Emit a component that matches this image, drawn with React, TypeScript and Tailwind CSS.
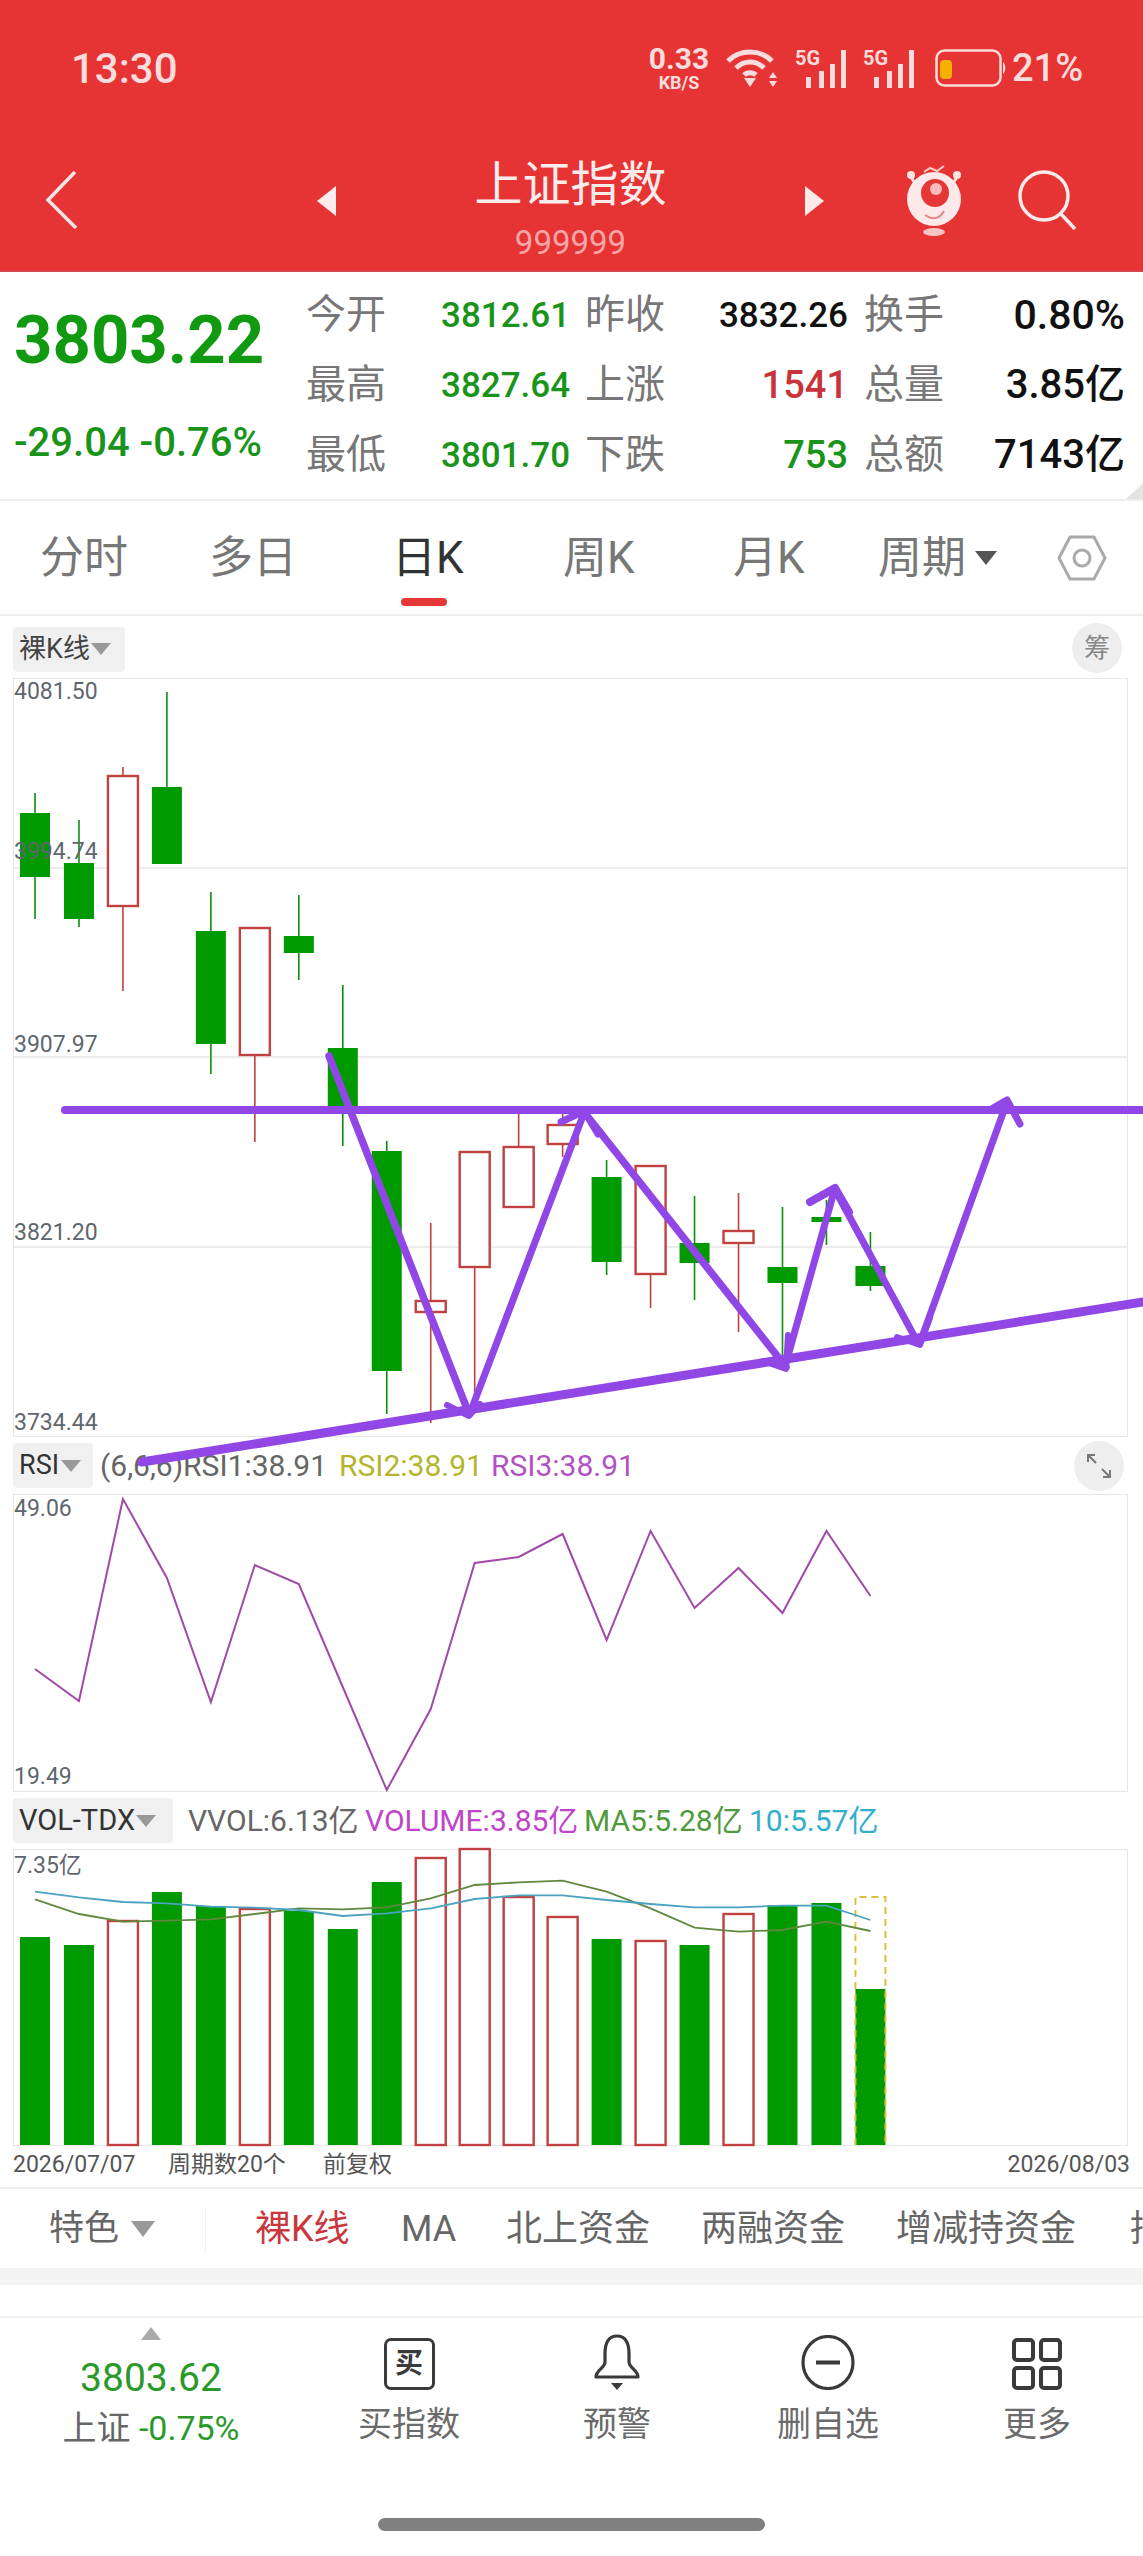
import React from "react";

const XS = Array.from({ length: 20 }, (_, i) => 35 + i * 43.97);
const BW = 30;

type C = { up: boolean; h: number; l: number; t: number; b: number };
const candles: C[] = [
  { up: false, h: 793, l: 919, t: 813, b: 877 },
  { up: false, h: 820, l: 927, t: 863, b: 919 },
  { up: true, h: 767, l: 991, t: 776, b: 906 },
  { up: false, h: 692, l: 864, t: 787, b: 864 },
  { up: false, h: 892, l: 1074, t: 931, b: 1044 },
  { up: true, h: 928, l: 1142, t: 928, b: 1055 },
  { up: false, h: 895, l: 980, t: 936, b: 953 },
  { up: false, h: 985, l: 1146, t: 1048, b: 1110 },
  { up: false, h: 1141, l: 1414, t: 1151, b: 1371 },
  { up: true, h: 1223, l: 1423, t: 1301, b: 1312 },
  { up: true, h: 1152, l: 1407, t: 1152, b: 1267 },
  { up: true, h: 1112, l: 1207, t: 1147, b: 1207 },
  { up: true, h: 1110, l: 1157, t: 1125, b: 1144 },
  { up: false, h: 1160, l: 1275, t: 1177, b: 1262 },
  { up: true, h: 1166, l: 1308, t: 1166, b: 1274 },
  { up: false, h: 1196, l: 1300, t: 1243, b: 1263 },
  { up: true, h: 1193, l: 1332, t: 1231, b: 1243 },
  { up: false, h: 1207, l: 1357, t: 1267, b: 1283 },
  { up: false, h: 1200, l: 1245, t: 1217, b: 1222 },
  { up: false, h: 1232, l: 1291, t: 1266, b: 1286 },
];

const rsi = [1669, 1701, 1499, 1578, 1702, 1565, 1584, 1687, 1790, 1709, 1563, 1557, 1534, 1640, 1531, 1608, 1568, 1613, 1531, 1596];
const vols = [1937, 1945, 1921, 1892, 1906, 1909, 1911, 1929, 1882, 1858, 1849, 1897, 1917, 1939, 1941, 1945, 1914, 1905, 1903, 1989];
const ma5 = [238, 282, 305, 302, 298, 282, 265, 268, 262, 235, 195, 187, 182, 215, 265, 323, 335, 330, 305, 333];
const ma10 = [215, 232, 246, 250, 260, 263, 270, 288, 280, 265, 237, 226, 226, 240, 252, 262, 262, 257, 257, 300];

const toPts = (ys: number[], f: (y: number) => number = (y) => y) =>
  ys.map((y, i) => `${XS[i]},${f(y)}`).join(" ");

function StatLabel({ children, pad }: { children: React.ReactNode; pad?: boolean }) {
  return <div className={pad ? "whitespace-nowrap pl-[16px] text-[40px] leading-none text-[#777777]" : "whitespace-nowrap text-[40px] leading-none text-[#777777]"}>{children}</div>;
}

function Status() {
  return (
    <div className="flex h-[136px] items-center text-[#fbdcdc]">
      <div className="ml-[71px] mt-[2px] w-[576px] text-[42px] font-medium leading-none">13:30</div>
      <div className="flex w-[64px] flex-col items-center font-bold leading-none">
        <span className="text-[30px] leading-[28px]">0.33</span>
        <span className="mt-[1px] text-[18px] leading-[18px]">KB/S</span>
      </div>
      <svg className="ml-[14px]" width="56" height="40" viewBox="0 0 56 40" fill="none" stroke="#fbdcdc" strokeWidth="5">
        <path d="M3 13C15 1 35 1 47 13" />
        <path d="M11 20C19 12 31 12 39 20" />
        <path d="M19 27C22 24 28 24 31 27" />
        <path d="M19 30L25 39L31 30Z" fill="#fbdcdc" stroke="none" />
        <path d="M48 24L52 30H44ZM48 39L52 33H44Z" fill="#fbdcdc" stroke="none" />
      </svg>
      <Signal className="ml-[14px]" />
      <Signal className="ml-[17px]" />
      <svg className="ml-[21px]" width="72" height="38" viewBox="0 0 72 38" fill="none">
        <rect x="1.5" y="1.5" width="64" height="35" rx="8" stroke="#fbdcdc" strokeWidth="2.5" />
        <rect x="5" y="11" width="12" height="19" rx="4" fill="#f5b000" />
        <path d="M68 13C71 15 71 23 68 25Z" fill="#fbdcdc" />
      </svg>
      <div className="ml-[5px] text-[38px] font-medium leading-none">21%</div>
    </div>
  );
}

function Signal({ className }: { className: string }) {
  return (
    <div className={`relative h-[40px] w-[51px] ${className}`}>
      <span className="absolute left-0 top-0 text-[20px] font-bold leading-none">5G</span>
      <svg className="absolute inset-0" width="51" height="40" viewBox="0 0 51 40" fill="#fbdcdc">
        <rect x="11" y="29" width="5" height="11" />
        <rect x="24" y="23" width="5" height="17" />
        <rect x="35" y="16" width="5" height="24" />
        <rect x="46" y="2" width="5" height="38" />
      </svg>
    </div>
  );
}

function Nav() {
  return (
    <div className="flex h-[134px] items-start">
      <div className="w-[317px] pl-[45px] pt-[35px]">
        <svg width="34" height="58" viewBox="0 0 34 58" fill="none" stroke="#fbe4e4" strokeWidth="3.5">
          <path d="M30 1L3 29L31 57" />
        </svg>
      </div>
      <svg className="mt-[50px]" width="20" height="30" viewBox="0 0 20 30" fill="#fdeaea"><path d="M19 0V30L0 15Z" /></svg>
      <div className="flex w-[467px] flex-col items-center">
        <div className="mt-[24px] text-[48px] leading-[50px] text-[#fdecec]">上证指数</div>
        <div className="mt-[15px] text-[33px] leading-[36px] text-[#f5a6a6]">999999</div>
      </div>
      <svg className="mt-[50px]" width="20" height="30" viewBox="0 0 20 30" fill="#fdeaea"><path d="M1 0V30L20 15Z" /></svg>
      <svg className="ml-[82px] mt-[29px]" width="56" height="72" viewBox="0 0 56 72" fill="none">
        <path d="M18 7L24 3L31 6L38 1" stroke="#f8c9c9" strokeWidth="2" />
        <circle cx="5" cy="10" r="4" fill="#fde4e4" />
        <circle cx="51" cy="10" r="4" fill="#fde4e4" />
        <path d="M5 12L10 20M51 12L46 20" stroke="#fde4e4" strokeWidth="3" />
        <circle cx="28" cy="34" r="27" fill="#fde9e9" />
        <circle cx="29" cy="28" r="14" fill="#e63737" />
        <circle cx="30" cy="24" r="6" fill="#f9bcbc" />
        <path d="M19 50C28 56 34 53 38 46" stroke="#e98282" strokeWidth="2" />
        <ellipse cx="28" cy="67" rx="11" ry="4" fill="#f8c3c3" />
      </svg>
      <svg className="ml-[55px] mt-[34px]" width="60" height="60" viewBox="0 0 60 60" fill="none" stroke="#fdeaea" strokeWidth="3.5">
        <circle cx="27" cy="26" r="24" />
        <path d="M44 44L58 59" />
      </svg>
    </div>
  );
}

function V({ children, r, c, size = "text-[35px]" }: { children: React.ReactNode; r?: boolean; c: string; size?: string }) {
  return <div className={`${r ? "text-right" : ""} ${size} font-medium leading-none ${c}`}>{children}</div>;
}

function Stats() {
  const cells: React.ReactNode[] = [
    <StatLabel key="a">今开</StatLabel>, <V key="b" c="text-[#1a931a]">3812.61</V>, <StatLabel key="c">昨收</StatLabel>, <V key="d" r c="text-[#111111]">3832.26</V>, <StatLabel key="e" pad>换手</StatLabel>, <V key="f" r c="text-[#111111]" size="text-[41px]">0.80%</V>,
    <StatLabel key="g">最高</StatLabel>, <V key="h" c="text-[#1a931a]">3827.64</V>, <StatLabel key="i">上涨</StatLabel>, <V key="j" r size="text-[38px]" c="text-[#c7343c]">1541</V>, <StatLabel key="k" pad>总量</StatLabel>, <V key="l" r c="text-[#111111]" size="text-[40px]">3.85亿</V>,
    <StatLabel key="m">最低</StatLabel>, <V key="n" c="text-[#1a931a]">3801.70</V>, <StatLabel key="o">下跌</StatLabel>, <V key="p" r size="text-[38px]" c="text-[#1a931a]">753</V>, <StatLabel key="q" pad>总额</StatLabel>, <V key="r" r c="text-[#111111]" size="text-[40px]">7143亿</V>,
  ];
  return (
    <div className="relative flex h-[227px]">
      <div className="flex w-[306px] flex-col pl-[14px]">
        <div className="mt-[32px] text-[67px] font-bold leading-[72px] text-[#119911]">3803.22</div>
        <div className="mt-[47px] whitespace-nowrap text-[40px] font-medium leading-[40px] text-[#1a931a]">-29.04 -0.76%</div>
      </div>
      <div className="grid grid-cols-[135px_144px_80px_183px_96px_181px] grid-rows-[70px_70px_70px] items-center pt-[8px]">
        {cells}
      </div>
      <svg className="absolute bottom-0 right-0" width="17" height="16" viewBox="0 0 17 16"><path d="M17 0V16H0Z" fill="#e4e4e4" /></svg>
    </div>
  );
}

function Tabs() {
  return (
    <div className="flex h-[117px] items-center border-y-2 border-[#eeeeee] text-[44px] leading-none text-[#777777]">
      <div className="ml-[40px] w-[169px]">分时</div>
      <div className="w-[183px]">多日</div>
      <div className="relative w-[171px] text-[#333333]">
        日K
        <span className="absolute left-[9px] top-[62px] h-[8px] w-[46px] rounded-full bg-[#e63737]" />
      </div>
      <div className="w-[170px]">周K</div>
      <div className="w-[145px]">月K</div>
      <div className="w-[97px]">周期</div>
      <svg width="22" height="14" viewBox="0 0 22 14" fill="#555555"><path d="M0 0H22L11 14Z" /></svg>
      <svg className="ml-[60px]" width="50" height="46" viewBox="0 0 50 46" fill="none" stroke="#aaaaaa" strokeWidth="3">
        <path d="M13 2H37L48 23L37 44H13L2 23Z" />
        <circle cx="25" cy="23" r="8" />
      </svg>
    </div>
  );
}

function Candles() {
  return (
    <svg className="absolute inset-0" width="1113" height="757" viewBox="14 679 1113 757" fill="none">
      {[868, 1057, 1247].map((y) => (
        <line key={y} x1="14" x2="1127" y1={y} y2={y} stroke="#e6e6e6" strokeWidth="1.5" />
      ))}
      {candles.map((c, i) => {
        const col = c.up ? "#c0413f" : "#0a8f0a";
        return (
          <g key={i}>
            <line x1={XS[i]} x2={XS[i]} y1={c.h} y2={c.l} stroke={col} strokeWidth="1.6" />
            {c.up ? (
              <rect x={XS[i] - BW / 2} y={c.t} width={BW} height={c.b - c.t} fill="#ffffff" stroke={col} strokeWidth="2.4" />
            ) : (
              <rect x={XS[i] - BW / 2} y={c.t} width={BW} height={c.b - c.t} fill="#009900" />
            )}
          </g>
        );
      })}
    </svg>
  );
}

function Axis({ children, className }: { children: React.ReactNode; className: string }) {
  return <span className={`absolute left-0 text-[23px] leading-none text-[#5f666d] ${className}`}>{children}</span>;
}

function Bars() {
  return (
    <svg className="absolute inset-0 overflow-visible" width="1113" height="295" viewBox="14 1850 1113 295" fill="none">
      {vols.map((t, i) =>
        candles[i].up ? (
          <rect key={i} x={XS[i] - BW / 2} y={t} width={BW} height={2145 - t} fill="#ffffff" stroke="#c0413f" strokeWidth="2.4" />
        ) : (
          <rect key={i} x={XS[i] - BW / 2} y={t} width={BW} height={2145 - t} fill="#009900" />
        )
      )}
      <path d={`M${XS[19] - BW / 2} 1989V1897H${XS[19] + BW / 2}V2145`} stroke="#d7c23c" strokeWidth="2" strokeDasharray="7 5" />
      <path d={`M${XS[19] - BW / 2} 2145V1989`} stroke="#d7c23c" strokeWidth="2" strokeDasharray="7 5" />
      <polyline points={toPts(ma5, (y) => y / 3 + 1820)} stroke="#5f8a3e" strokeWidth="1.8" />
      <polyline points={toPts(ma10, (y) => y / 3 + 1820)} stroke="#4aa3bf" strokeWidth="1.8" />
    </svg>
  );
}

function Annotations() {
  const col = "#9147e6";
  return (
    <svg className="pointer-events-none absolute inset-0" width="1143" height="2556" viewBox="0 0 1143 2556" fill="none" stroke={col} strokeLinecap="round" strokeLinejoin="round">
      <path d="M65 1110H1143" strokeWidth="8" />
      <path d="M142 1462L1143 1302" strokeWidth="9" />
      <path d="M329 1056L469 1414" strokeWidth="7.5" />
      <path d="M447 1405L469 1416L480 1404" strokeWidth="6" />
      <path d="M472 1408L584 1113" strokeWidth="7" />
      <path d="M561 1122L584 1111L598 1134" strokeWidth="7" />
      <path d="M588 1117L786 1367" strokeWidth="7.5" />
      <path d="M763 1361L786 1369L788 1335" strokeWidth="6" />
      <path d="M786 1363L835 1188" strokeWidth="7" />
      <path d="M810 1202L835 1188L849 1212" strokeWidth="8" />
      <path d="M835 1190L918 1343" strokeWidth="7" />
      <path d="M897 1337L920 1345L930 1318" strokeWidth="6" />
      <path d="M921 1340L1007 1102" strokeWidth="7" />
      <path d="M993 1108L1007 1100L1020 1124" strokeWidth="7" />
    </svg>
  );
}

function BottomItem({ label, w, children }: { label: string; w: string; children: React.ReactNode }) {
  return (
    <div className={`flex flex-col items-center ${w}`}>
      <div className="flex h-[72px] items-end">{children}</div>
      <div className="mt-[14px] text-[34px] leading-[40px] text-[#6b6b6b]">{label}</div>
    </div>
  );
}

export default function App() {
  return (
    <div className="relative flex h-[2556px] w-[1143px] flex-col overflow-hidden bg-white font-[Roboto,'Noto_Sans_CJK_SC',sans-serif]">
      <header className="h-[272px] border-b-2 border-[#d64550] bg-[#e63333]">
        <Status />
        <Nav />
      </header>
      <Stats />
      <Tabs />
      <div className="flex h-[62px] items-center justify-between pl-[13px] pr-[21px]">
        <div className="mt-[4px] flex h-[45px] w-[112px] items-center rounded-[4px] bg-[#f0f0f0] pl-[6px] text-[27px] leading-none text-[#444444]">
          裸K线
          <svg className="ml-[1px]" width="20" height="12" viewBox="0 0 20 12" fill="#999999"><path d="M0 0H20L10 12Z" /></svg>
        </div>
        <div className="mt-[2px] flex h-[50px] w-[50px] items-center justify-center rounded-full bg-[#eeeeee] text-[26px] leading-none text-[#888888]">筹</div>
      </div>
      <div className="relative mx-[13px] h-[759px] w-[1115px] shrink-0 border border-[#e6e6e6]">
        <Candles />
        <Axis className="top-[1px]">4081.50</Axis>
        <Axis className="top-[161px]">3994.74</Axis>
        <Axis className="top-[354px]">3907.97</Axis>
        <Axis className="top-[542px]">3821.20</Axis>
        <Axis className="top-[732px]">3734.44</Axis>
      </div>
      <div className="flex h-[57px] shrink-0 items-center px-[13px] text-[30px] leading-none">
        <div className="flex h-[45px] w-[80px] shrink-0 items-center rounded-[4px] bg-[#f0f0f0] pl-[6px] text-[27px] text-[#333333]">
          RSI
          <svg className="ml-[2px]" width="20" height="12" viewBox="0 0 20 12" fill="#999999"><path d="M0 0H20L10 12Z" /></svg>
        </div>
        <span className="ml-[7px] w-[239px] shrink-0 whitespace-nowrap text-[#666666]">(6,6,6)RSI1:38.91</span>
        <span className="w-[152px] shrink-0 text-[#b4b52c]">RSI2:38.91</span>
        <span className="text-[#b251c2]">RSI3:38.91</span>
        <div className="ml-auto mr-[6px] flex h-[50px] w-[50px] items-center justify-center rounded-full bg-[#eeeeee]">
          <svg width="30" height="30" viewBox="0 0 30 30" fill="none" stroke="#777777" strokeWidth="2">
            <path d="M4 11V4H11M4 4L12 12M26 19V26H19M26 26L18 18" />
          </svg>
        </div>
      </div>
      <div className="relative mx-[13px] h-[298px] w-[1115px] shrink-0 border border-[#e6e6e6]">
        <svg className="absolute inset-0 overflow-visible" width="1113" height="296" viewBox="14 1495 1113 296" fill="none">
          <polyline points={toPts(rsi)} stroke="#a04aa8" strokeWidth="2" />
        </svg>
        <Axis className="top-[2px]">49.06</Axis>
        <Axis className="top-[270px]">19.49</Axis>
      </div>
      <div className="flex h-[57px] shrink-0 items-center px-[13px] text-[30px] leading-none">
        <div className="flex h-[45px] w-[160px] shrink-0 items-center rounded-[4px] bg-[#f0f0f0] pl-[6px] text-[29px] text-[#333333]">
          VOL-TDX
          <svg className="ml-[1px]" width="20" height="12" viewBox="0 0 20 12" fill="#999999"><path d="M0 0H20L10 12Z" /></svg>
        </div>
        <span className="ml-[15px] w-[177px] shrink-0 whitespace-nowrap text-[#666666]">VVOL:6.13亿</span>
        <span className="w-[219px] shrink-0 whitespace-nowrap text-[#bf44c9]">VOLUME:3.85亿</span>
        <span className="w-[165px] shrink-0 whitespace-nowrap text-[#4f9a3a]">MA5:5.28亿</span>
        <span className="whitespace-nowrap text-[#32aecb]">10:5.57亿</span>
      </div>
      <div className="relative mx-[13px] h-[297px] w-[1115px] shrink-0 border border-[#e6e6e6]">
        <Bars />
        <Axis className="top-[4px]">7.35亿</Axis>
      </div>
      <div className="flex h-[41px] shrink-0 items-start px-[13px] pt-[5px] text-[23px] leading-[28px] text-[#555555]">
        <span className="w-[155px]">2026/07/07</span>
        <span className="w-[155px]">周期数20个</span>
        <span>前复权</span>
        <span className="ml-auto">2026/08/03</span>
      </div>
      <div className="flex h-[81px] shrink-0 items-center overflow-hidden whitespace-nowrap border-t-2 border-[#eeeeee] text-[36px] leading-none text-[#666666]">
        <span className="ml-[49px] shrink-0 text-[35px]">特色</span>
        <svg className="ml-[12px] shrink-0" width="24" height="16" viewBox="0 0 24 16" fill="#999999"><path d="M0 0H24L12 16Z" /></svg>
        <span className="ml-[50px] h-[44px] w-[1px] shrink-0 bg-[#f0f0f0]" />
        <span className="ml-[49px] w-[146px] shrink-0 text-[#c9383e]">裸K线</span>
        <span className="w-[105px] shrink-0">MA</span>
        <span className="w-[195px] shrink-0">北上资金</span>
        <span className="w-[195px] shrink-0">两融资金</span>
        <span className="w-[234px] shrink-0">增减持资金</span>
        <span className="shrink-0">持股</span>
      </div>
      <div className="h-[17px] shrink-0 bg-[#f4f4f4]" />
      <div className="h-[33px] shrink-0 border-b-2 border-[#f0f0f0]" />
      <div className="flex h-[200px] shrink-0 items-start">
        <div className="flex w-[302px] flex-col items-center">
          <svg className="mt-[9px]" width="20" height="13" viewBox="0 0 20 13" fill="#aaaaaa"><path d="M10 0L20 13H0Z" /></svg>
          <div className="mt-[16px] text-[39px] leading-[44px] text-[#2a992a]">3803.62</div>
          <div className="mt-[8px] text-[34px] leading-[40px] text-[#666666]">
            上证 <span className="text-[#2a992a]">-0.75%</span>
          </div>
        </div>
        <BottomItem label="买指数" w="w-[214px]">
          <div className="flex h-[52px] w-[51px] items-center justify-center rounded-[7px] border-[3px] border-[#3a3a3a] text-[28px] font-bold leading-none text-[#3a3a3a]">买</div>
        </BottomItem>
        <BottomItem label="预警" w="w-[202px]">
          <svg width="48" height="56" viewBox="0 0 48 56" fill="none" stroke="#3a3a3a" strokeWidth="3.2">
            <path d="M24 2C15 2 12 10 12 20V28C12 34 3 36 3 43H45C45 36 36 34 36 28V20C36 10 33 2 24 2Z" strokeLinejoin="round" />
            <path d="M18 49H30L24 56Z" fill="#3a3a3a" stroke="none" />
          </svg>
        </BottomItem>
        <BottomItem label="删自选" w="w-[220px]">
          <svg width="54" height="55" viewBox="0 0 54 55" fill="none" stroke="#3a3a3a" strokeWidth="3.2">
            <ellipse cx="27" cy="27.5" rx="25" ry="26" />
            <path d="M15 27.5H39" strokeWidth="4" />
          </svg>
        </BottomItem>
        <BottomItem label="更多" w="w-[198px]">
          <svg width="50" height="52" viewBox="0 0 50 52" fill="none" stroke="#3a3a3a" strokeWidth="4">
            <rect x="2" y="2" width="19" height="20" rx="3" />
            <rect x="29" y="2" width="19" height="20" rx="3" />
            <rect x="2" y="30" width="19" height="20" rx="3" />
            <rect x="29" y="30" width="19" height="20" rx="3" />
          </svg>
        </BottomItem>
      </div>
      <div className="mx-auto h-[13px] w-[387px] shrink-0 rounded-full bg-[#808080]" />
      <Annotations />
    </div>
  );
}
